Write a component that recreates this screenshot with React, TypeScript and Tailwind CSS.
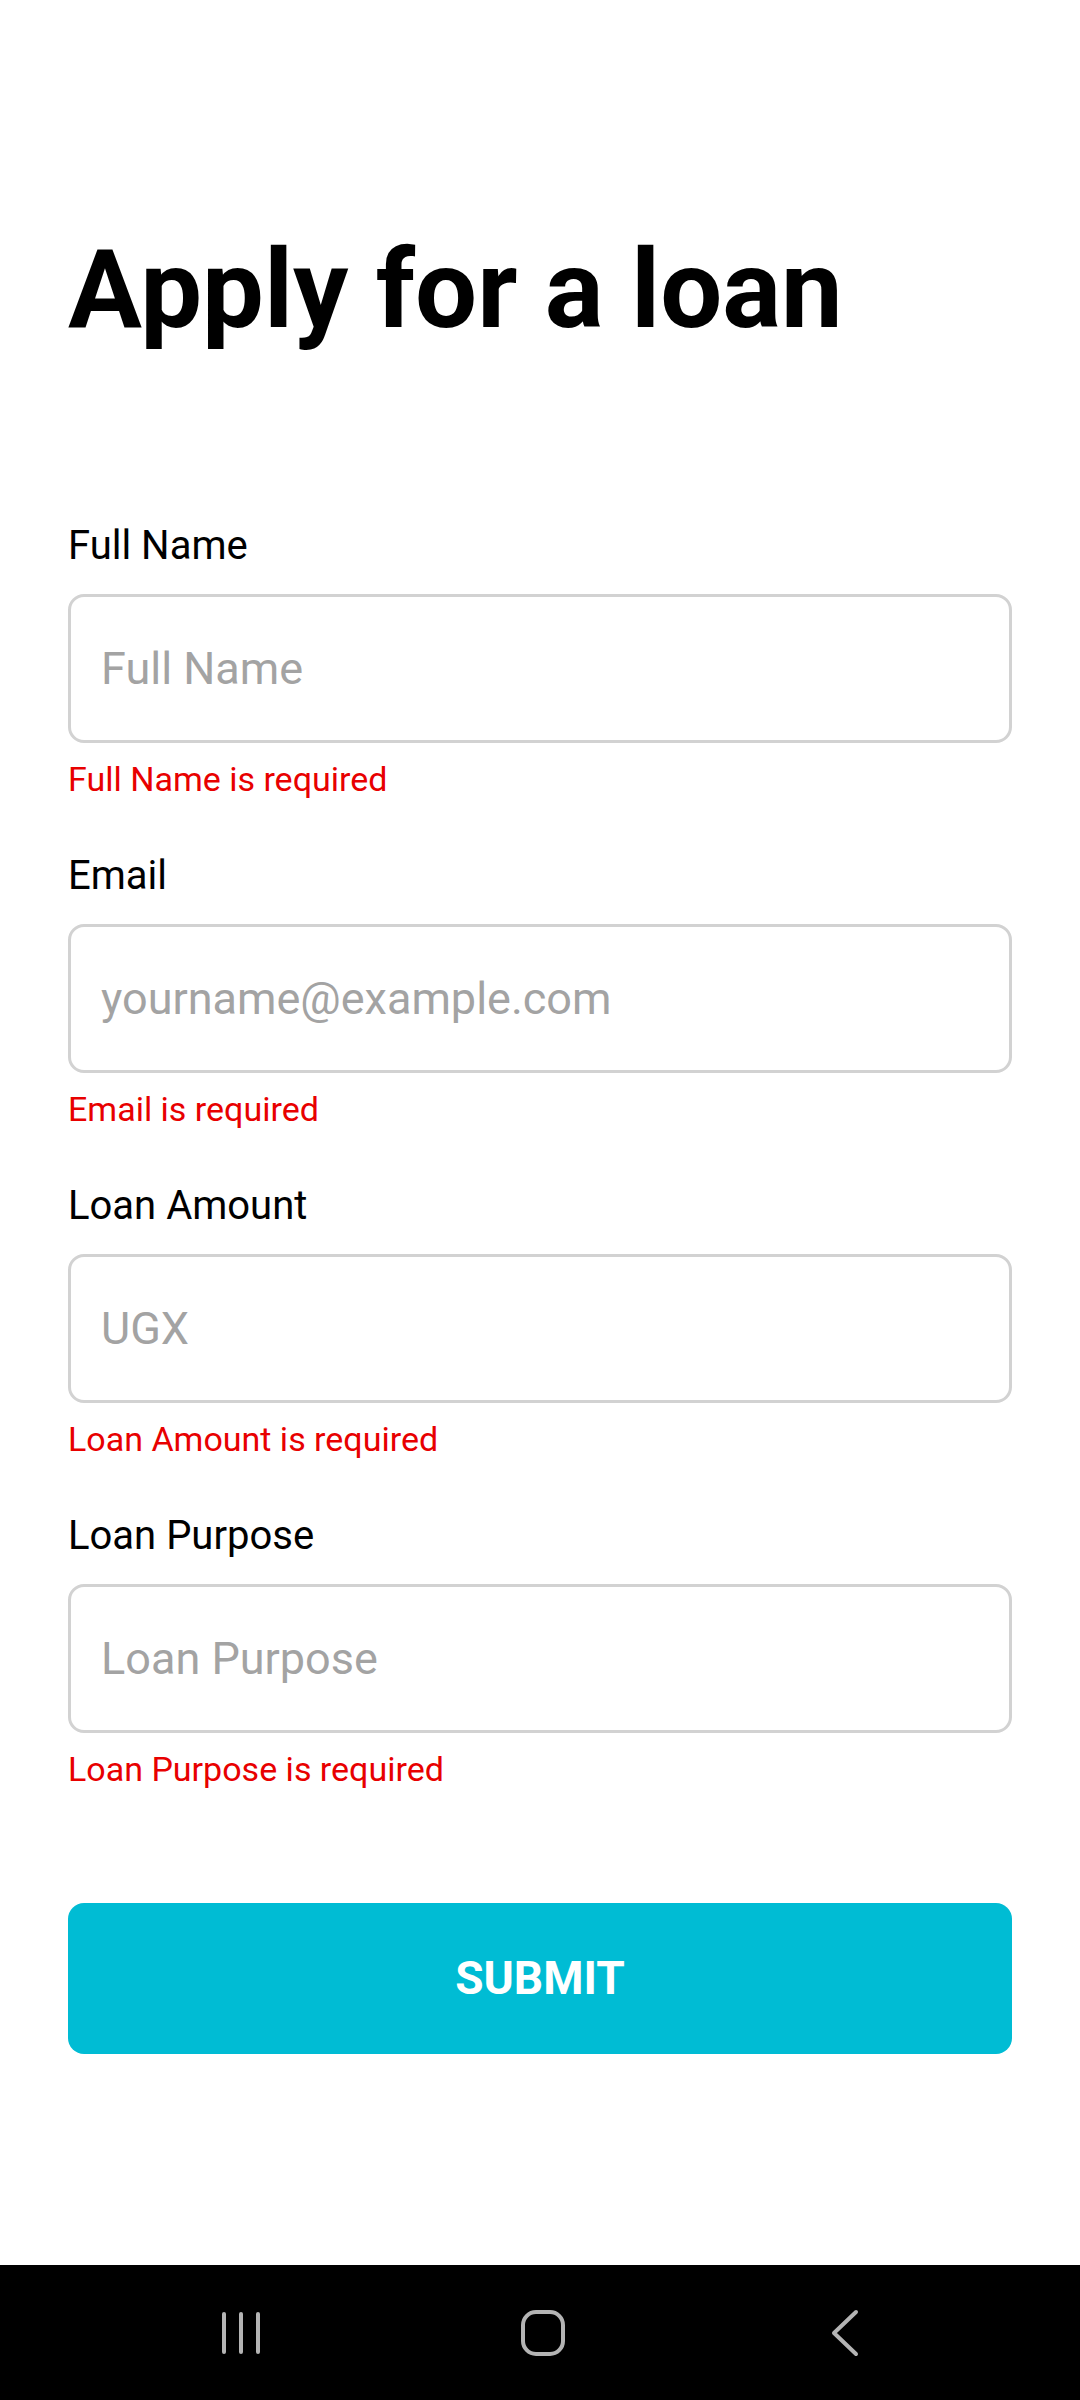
import React from "react";

const fields = [
  { label: "Full Name", placeholder: "Full Name" },
  { label: "Email", placeholder: "yourname@example.com" },
  { label: "Loan Amount", placeholder: "UGX" },
  { label: "Loan Purpose", placeholder: "Loan Purpose" },
];

function Field({ label, placeholder }: { label: string; placeholder: string }) {
  return (
    <div className="flex flex-col">
      <label className="text-[40px] leading-none text-black">{label}</label>
      <input
        type="text"
        placeholder={placeholder}
        className="mt-[28px] h-[149px] w-full rounded-[16px] border-[3px] border-[#d2d2d2] bg-white px-[30px] text-[45px] text-black outline-none placeholder:text-[#a3a3a3]"
      />
      <p className="mt-[19px] text-[34px] leading-none text-[#e80000]">
        {label} is required
      </p>
    </div>
  );
}

export default function App() {
  return (
    <div className="flex h-[2400px] w-[1080px] flex-col bg-white font-['Roboto',sans-serif]">
      {/* Form */}
      <div className="flex-1 px-[68px] pt-[235px]">
        <h1 className="text-[110px] font-bold leading-none text-black">
          Apply for a loan
        </h1>

        <div className="mt-[181px] flex flex-col gap-[60px]">
          {fields.map((f) => (
            <Field key={f.label} label={f.label} placeholder={f.placeholder} />
          ))}
        </div>

        <button className="mt-[117px] flex h-[151px] w-full items-center justify-center rounded-[16px] bg-[#00bcd4] text-[46px] font-bold text-white">
          SUBMIT
        </button>
      </div>

      {/* Android nav bar */}
      <div className="flex h-[135px] items-center bg-black pl-[90px]">
        <div className="flex w-[302px] justify-center">
          <svg width="40" height="44" viewBox="0 0 40 44">
            <g stroke="#b4b4b4" strokeWidth="4" strokeLinecap="round">
              <line x1="3" y1="3" x2="3" y2="41" />
              <line x1="20" y1="3" x2="20" y2="41" />
              <line x1="37" y1="3" x2="37" y2="41" />
            </g>
          </svg>
        </div>
        <div className="flex w-[302px] justify-center">
          <svg width="44" height="46" viewBox="0 0 44 46">
            <rect x="2" y="2" width="40" height="42" rx="13" fill="none" stroke="#b4b4b4" strokeWidth="4" />
          </svg>
        </div>
        <div className="flex w-[302px] justify-center">
          <svg width="30" height="48" viewBox="0 0 30 48">
            <polyline points="26,3 4,24 26,45" fill="none" stroke="#b4b4b4" strokeWidth="4" strokeLinecap="round" strokeLinejoin="round" />
          </svg>
        </div>
      </div>
    </div>
  );
}
